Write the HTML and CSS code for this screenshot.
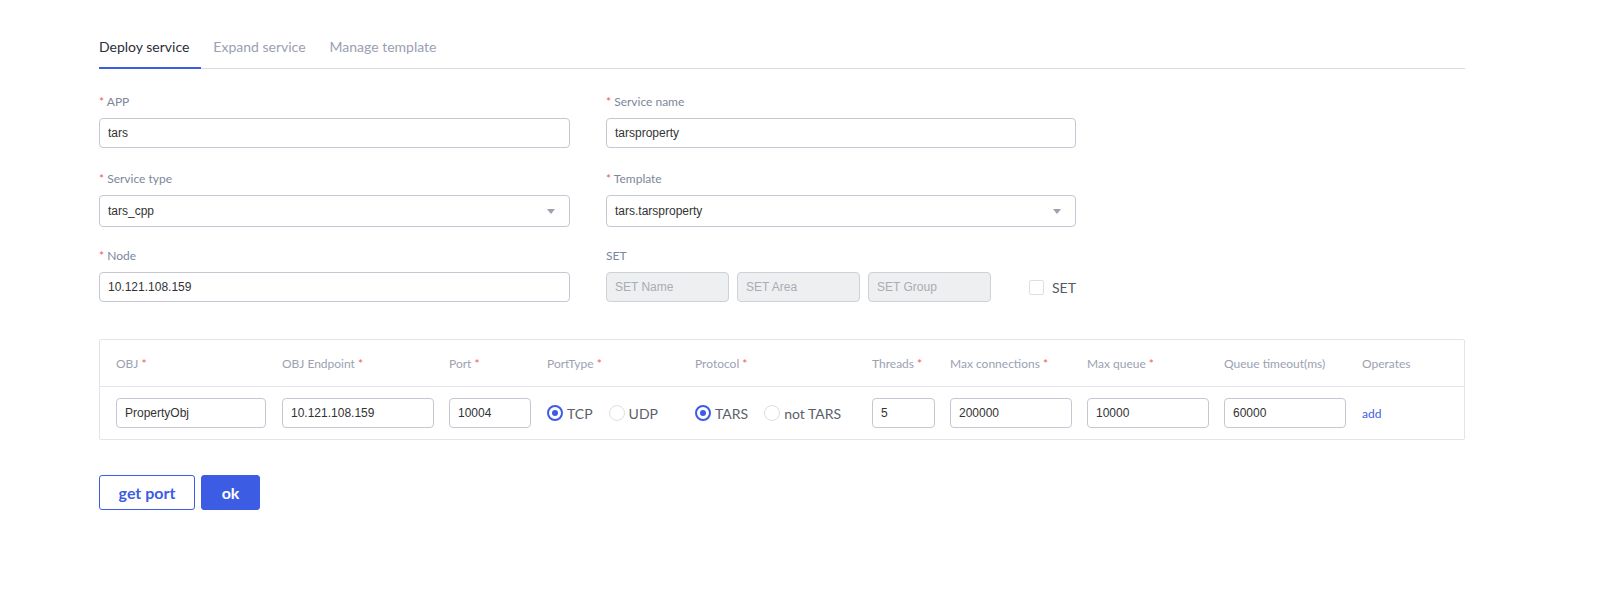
FILE: index.html
```html
<!DOCTYPE html>
<html>
<head>
<meta charset="utf-8">
<link rel="stylesheet" href="styles.css">
</head>
<body>
<div class="page">
  <div class="tabs">
    <div class="tab active">Deploy service</div>
    <div class="tab">Expand service</div>
    <div class="tab">Manage template</div>
  </div>

  <div class="form">
    <div class="item">
      <div class="label"><span class="req">*</span> APP</div>
      <div class="input">tars</div>
    </div>
    <div class="item">
      <div class="label"><span class="req">*</span> Service name</div>
      <div class="input">tarsproperty</div>
    </div>
    <div class="item">
      <div class="label"><span class="req">*</span> Service type</div>
      <div class="input select"><span>tars_cpp</span><i class="arrow"></i></div>
    </div>
    <div class="item">
      <div class="label"><span class="req">*</span> Template</div>
      <div class="input select"><span>tars.tarsproperty</span><i class="arrow"></i></div>
    </div>
    <div class="item">
      <div class="label"><span class="req">*</span> Node</div>
      <div class="input">10.121.108.159</div>
    </div>
    <div class="item">
      <div class="label">SET</div>
      <div class="set-row">
        <div class="input disabled">SET Name</div>
        <div class="input disabled">SET Area</div>
        <div class="input disabled">SET Group</div>
        <label class="check"><i class="box"></i>SET</label>
      </div>
    </div>
  </div>

  <div class="table">
    <div class="tr head">
      <div class="td">OBJ <span class="req">*</span></div>
      <div class="td">OBJ Endpoint <span class="req">*</span></div>
      <div class="td">Port <span class="req">*</span></div>
      <div class="td">PortType <span class="req">*</span></div>
      <div class="td">Protocol <span class="req">*</span></div>
      <div class="td">Threads <span class="req">*</span></div>
      <div class="td">Max connections <span class="req">*</span></div>
      <div class="td">Max queue <span class="req">*</span></div>
      <div class="td">Queue timeout(ms)</div>
      <div class="td">Operates</div>
    </div>
    <div class="tr body">
      <div class="td"><div class="input cell w150">PropertyObj</div></div>
      <div class="td"><div class="input cell w152">10.121.108.159</div></div>
      <div class="td"><div class="input cell w82">10004</div></div>
      <div class="td radios">
        <span class="radio on"><i></i>TCP</span>
        <span class="radio"><i></i>UDP</span>
      </div>
      <div class="td radios">
        <span class="radio on"><i></i>TARS</span>
        <span class="radio"><i></i>not TARS</span>
      </div>
      <div class="td"><div class="input cell w63">5</div></div>
      <div class="td"><div class="input cell w122">200000</div></div>
      <div class="td"><div class="input cell w122">10000</div></div>
      <div class="td"><div class="input cell w122">60000</div></div>
      <div class="td"><a class="link">add</a></div>
    </div>
  </div>

  <div class="actions">
    <button class="btn ghost">get port</button>
    <button class="btn primary">ok</button>
  </div>
</div>
</body>
</html>
```

FILE: styles.css
```css
* { box-sizing: border-box; }
html, body { margin: 0; padding: 0; background: #fff; }
body { font-family: Lato, "Noto Sans", sans-serif; color: #333; }

.page { padding: 0 132px 0 99px; }

.tabs {
  display: flex;
  padding-top: 37px;
  border-bottom: 1px solid #d9dce6;
}
.tab {
  font-size: 14px;
  line-height: 20px;
  padding: 0 12px 10px;
  color: #9aa0b2;
  border-bottom: 2px solid transparent;
  margin-bottom: -1px;
}
.tab:first-child { padding-left: 0; }
.tab.active { color: #2b2f3a; border-bottom-color: #3d5ce4; }

.form {
  display: grid;
  grid-template-columns: 471px 470px;
  column-gap: 36px;
  row-gap: 21px;
  margin-top: 23px;
}
.label {
  font-size: 12px;
  line-height: 20px;
  color: #7d869c;
  margin-bottom: 6px;
}
.req { color: #f25c5c; }

.input {
  height: 30px;
  border: 1px solid #c5c8d2;
  border-radius: 4px;
  padding: 0 8px;
  font-family: "Liberation Sans", Arial, sans-serif;
  font-size: 12px;
  color: #333;
  display: flex;
  align-items: center;
  background: #fff;
}
.select { height: 32px; justify-content: space-between; padding-right: 14px; }
.arrow {
  width: 0; height: 0;
  border-left: 4px solid transparent;
  border-right: 4px solid transparent;
  border-top: 5px solid #9ea2ad;
}
.form .item:nth-child(3), .form .item:nth-child(4) { margin-bottom: -2px; }

.set-row { display: flex; align-items: center; gap: 8px; }
.input.disabled {
  width: 123px;
  background: #eeeff1;
  border-color: #cfd1d8;
  color: #a9acb5;
}
.check {
  display: flex;
  align-items: center;
  margin-left: 30px;
  font-size: 14px;
  color: #555a66;
}
.box {
  width: 15px; height: 15px;
  border: 1px solid #dcdfe6;
  border-radius: 2px;
  margin-right: 8px;
}

.table {
  margin-top: 37px;
  border: 1px solid #e2e4eb;
  border-radius: 2px;
}
.tr {
  display: grid;
  grid-template-columns: 166px 167px 98px 148px 177px 78px 137px 137px 138px 1fr;
  align-items: center;
}
.head { height: 47px; border-bottom: 1px solid #e2e4eb; }
.body { height: 52px; }
.td { padding-left: 16px; font-size: 12px; color: #9ca1b2; white-space: nowrap; }
.cell { padding: 0 8px; }
.w150 { width: 150px; }
.w152 { width: 152px; }
.w82 { width: 82px; }
.w63 { width: 63px; }
.w122 { width: 122px; }

.radios { display: flex; align-items: center; gap: 16px; }
.radio {
  display: inline-flex;
  align-items: center;
  font-size: 14px;
  color: #5a5f6b;
}
.radio i {
  width: 16px; height: 16px;
  border-radius: 50%;
  border: 1px solid #dcdfe6;
  margin-right: 4px;
  background: #fff;
  position: relative;
}
.radio.on i { border: 2px solid #3d5ce4; }
.radio.on i::after {
  content: "";
  position: absolute;
  left: 3px; top: 3px;
  width: 6px; height: 6px;
  border-radius: 50%;
  background: #3d5ce4;
}
.link { color: #3d5ce4; font-size: 12px; }

.actions { display: flex; gap: 6px; margin-top: 35px; }
.btn {
  height: 35px;
  border-radius: 3px;
  font-family: Lato, "Noto Sans", sans-serif;
  font-weight: 700;
  font-size: 16px;
  border: 1px solid #3d5ce4;
  padding: 0;
}
.ghost { width: 96px; background: #fff; color: #3d5ce4; }
.primary { width: 59px; background: #3d5ce4; color: #fff; }
```
